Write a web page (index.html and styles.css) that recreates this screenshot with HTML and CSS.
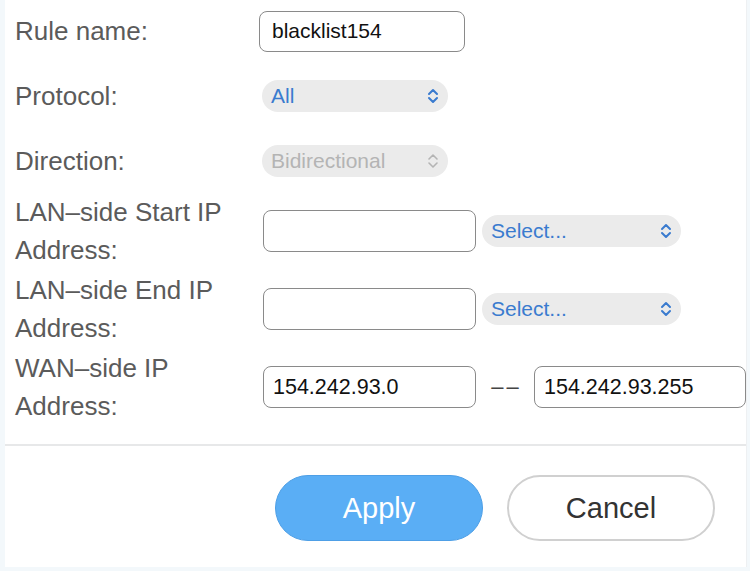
FILE: index.html
```html
<!DOCTYPE html>
<html>
<head>
<meta charset="utf-8">
<link rel="stylesheet" href="styles.css">
</head>
<body>
<div class="panel">
  <div class="form">
    <div class="row r1">
      <div class="label">Rule name:</div>
      <div class="field name-field">blacklist154</div>
    </div>
    <div class="row r2">
      <div class="label">Protocol:</div>
      <div class="select sel-short">
        <span>All</span>
        <svg class="chev" width="12" height="16" viewBox="0 0 12 16"><path d="M2 6 L6 2 L10 6 M2 10 L6 14 L10 10" fill="none" stroke="currentColor" stroke-width="2" stroke-linecap="round" stroke-linejoin="round"/></svg>
      </div>
    </div>
    <div class="row r3">
      <div class="label">Direction:</div>
      <div class="select sel-short disabled">
        <span>Bidirectional</span>
        <svg class="chev" width="12" height="16" viewBox="0 0 12 16"><path d="M2 6 L6 2 L10 6 M2 10 L6 14 L10 10" fill="none" stroke="currentColor" stroke-width="1.6" stroke-linecap="round" stroke-linejoin="round"/></svg>
      </div>
    </div>
    <div class="row r4">
      <div class="label">LAN–side Start IP<br>Address:</div>
      <div class="field ip"></div>
      <div class="select sel-long">
        <span>Select...</span>
        <svg class="chev" width="12" height="16" viewBox="0 0 12 16"><path d="M2 6 L6 2 L10 6 M2 10 L6 14 L10 10" fill="none" stroke="currentColor" stroke-width="2" stroke-linecap="round" stroke-linejoin="round"/></svg>
      </div>
    </div>
    <div class="row r4">
      <div class="label">LAN–side End IP<br>Address:</div>
      <div class="field ip"></div>
      <div class="select sel-long">
        <span>Select...</span>
        <svg class="chev" width="12" height="16" viewBox="0 0 12 16"><path d="M2 6 L6 2 L10 6 M2 10 L6 14 L10 10" fill="none" stroke="currentColor" stroke-width="2" stroke-linecap="round" stroke-linejoin="round"/></svg>
      </div>
    </div>
    <div class="row r4">
      <div class="label">WAN–side IP<br>Address:</div>
      <div class="field ip">154.242.93.0</div>
      <div class="dash"><span>–</span><span>–</span></div>
      <div class="field ip ip2">154.242.93.255</div>
    </div>
  </div>
  <div class="divider"></div>
  <div class="actions">
    <div class="btn apply">Apply</div>
    <div class="btn cancel">Cancel</div>
  </div>
</div>
</body>
</html>
```

FILE: styles.css
```css
html, body {
  margin: 0;
  padding: 0;
}
body {
  width: 750px;
  height: 571px;
  background: #f3f8fb;
  font-family: "Liberation Sans", Arial, sans-serif;
  overflow: hidden;
}
.panel {
  margin-left: 5px;
  width: 741px;
  height: 567px;
  background: #ffffff;
  border-right: 1px solid #eef0f2;
}
.form {
  padding-left: 10px;
}
.row {
  display: flex;
  align-items: center;
}
.r1 { height: 62px; }
.r2 { height: 68px; }
.r3 { height: 62px; }
.r4 { height: 78px; }
.label {
  width: 247px;
  flex: none;
  font-size: 26px;
  line-height: 38px;
  color: #5b5b5b;
}
.field {
  box-sizing: border-box;
  border: 1.5px solid #8a8a8a;
  border-radius: 8px;
  background: #fff;
  font-size: 21px;
  color: #111;
  display: flex;
  align-items: center;
}
.name-field {
  width: 206px;
  height: 41px;
  margin-left: -3px;
  padding-left: 12px;
}
.ip {
  width: 213px;
  height: 42px;
  margin-left: 1px;
  padding-left: 9px;
  font-size: 21.5px;
}
.ip2 {
  width: 212px;
  margin-left: 0;
}
.dash {
  width: 58px;
  display: flex;
  justify-content: center;
  gap: 3px;
  font-size: 22px;
  color: #444;
}
.select {
  box-sizing: border-box;
  height: 32px;
  border-radius: 16px;
  background: #ebebeb;
  color: #3a7bcf;
  font-size: 21px;
  display: flex;
  align-items: center;
  justify-content: space-between;
  padding-left: 9px;
  padding-right: 9px;
}
.sel-short {
  width: 186px;
}
.sel-long {
  width: 199px;
  margin-left: 6px;
}
.select.disabled {
  color: #b4b4b4;
}
.chev {
  display: block;
}
.divider {
  margin-top: 18px;
  height: 2px;
  background: #e7e8e9;
}
.actions {
  display: flex;
  gap: 24px;
  padding-left: 270px;
  margin-top: 29px;
}
.btn {
  box-sizing: border-box;
  width: 208px;
  height: 66px;
  border-radius: 33px;
  font-size: 29px;
  display: flex;
  align-items: center;
  justify-content: center;
}
.apply {
  background: #5aaef5;
  border: 1px solid #4e9fe6;
  color: #ffffff;
}
.cancel {
  background: #ffffff;
  border: 2px solid #d0d0d0;
  color: #333333;
}
```
